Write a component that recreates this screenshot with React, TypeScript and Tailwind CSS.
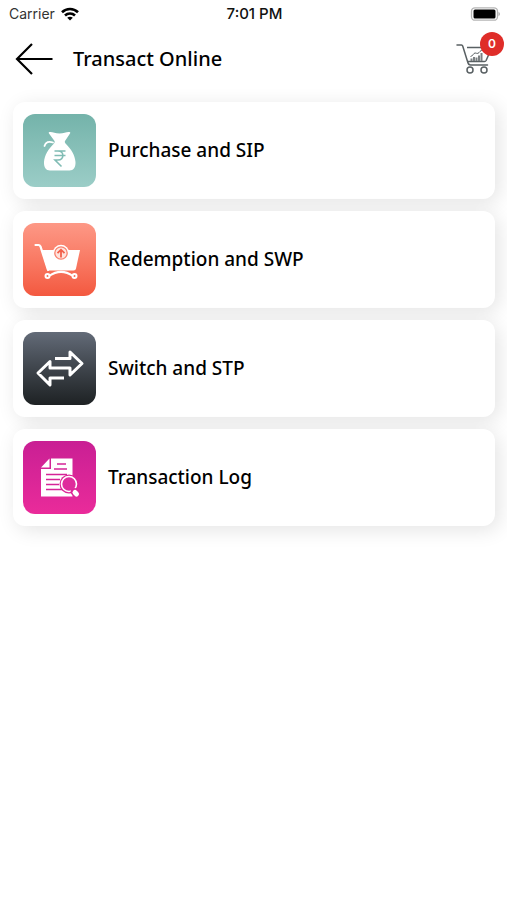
import type { ReactNode } from 'react';

interface MenuItem {
  id: string;
  label: string;
  tile: string;
  icon: ReactNode;
}

function MoneyBagIcon() {
  return (
    <svg viewBox="0 0 73 73" className="h-full w-full" fill="none" aria-hidden="true">
      <path
        fill="#fff"
        d="M26.5 18c3-.4 5.5 1.5 10 1.5s7-1.9 10-1.5c.8.1 1 .7.5 1.5L42 27c-.5 1 0 2 1 3 5 5 9 11 9.5 18 .3 5-2 8.500-6 8.500H27c-4 0-6.300-3.500-6-8.500.5-7 4.500-13 9.500-18 1-1 1.500-2 1-3L26 19.500c-.5-.8-.3-1.400.5-1.500Z"
      />
      <path d="M30 28.500c-4-1.500-7.500-.5-8.500 3.500" stroke="#fff" strokeWidth="1.8" strokeLinecap="round" />
      <path d="M31.500 37h11M31.500 41.500h11M31.500 37h3.500c6.500 0 6.500 9 0 9h-3l6.500 6.500" stroke="#80bcb4" strokeWidth="1.6" />
    </svg>
  );
}

function RedeemCartIcon() {
  return (
    <svg viewBox="0 0 73 73" className="h-full w-full" fill="none" aria-hidden="true">
      <path d="M12.5 22h3c1 0 1.5.5 2 1.500L25 47" stroke="#fff" strokeWidth="2.2" strokeLinecap="round" />
      <path fill="#fff" d="M18.500 27H57l-4 18.500c-.3 1.300-1 2-2.500 2H24.500Z" />
      <circle cx="38" cy="30" r="8.2" fill="#fff" />
      <circle cx="38" cy="30" r="6.2" fill="#fee3dd" stroke="#f9826e" strokeWidth="1.3" />
      <path d="M38 34.500V27M34.500 30.200l3.500-3.500 3.500 3.500" stroke="#f2604a" strokeWidth="1.8" />
      <path d="M26 53c8-5.500 16-5.500 24 0" stroke="#fff" strokeWidth="2" />
      <circle cx="24.500" cy="53" r="2" stroke="#fff" strokeWidth="2" />
      <circle cx="51.500" cy="53" r="2" stroke="#fff" strokeWidth="2" />
    </svg>
  );
}

function SwitchIcon() {
  return (
    <svg viewBox="0 0 73 73" className="h-full w-full" fill="none" aria-hidden="true">
      <path
        d="M32 26.500h15V20l12 11.500L47 43v-7H27v-6.500L15 41l12 12v-7h14"
        stroke="#fff"
        strokeWidth="3"
        strokeLinejoin="round"
      />
    </svg>
  );
}

function LogIcon() {
  return (
    <svg viewBox="0 0 73 73" className="h-full w-full" fill="none" aria-hidden="true">
      <path fill="#fff" d="M28 17.500h21.500v38H18V28h10Z" />
      <path fill="#fff" d="M26.500 17.500v9H18Z" />
      <path d="M34 23h9M31 28h13M23 33.500h21M23 38.500h14M23 43.500h13M23 48.500h16" stroke="#d52498" strokeWidth="1.4" />
      <circle cx="46" cy="43" r="9.5" fill="#dd2798" />
      <circle cx="46" cy="43" r="7.5" fill="#df2c9c" stroke="#fff" strokeWidth="1.6" />
      <path d="m51.500 51 1.500 1.500" stroke="#dd2798" strokeWidth="7.5" strokeLinecap="round" />
      <path d="m52 51.500 1.500 1.500" stroke="#fff" strokeWidth="5" strokeLinecap="round" />
    </svg>
  );
}

function CartIcon() {
  return (
    <svg viewBox="0 0 36 34" className="h-[34px] w-9" fill="none" stroke="#596063" strokeWidth="1.5" aria-hidden="true">
      <path d="M1 3h4.500c.7 0 1 .4 1.200 1l5 16c.5 2 1 3 2.800 3h17" strokeLinecap="round" />
      <path d="M11 5.500h15M11.500 19.500h17c.8 0 1.300-.4 1.600-1L33 12" />
      <circle cx="14" cy="28" r="3" />
      <circle cx="28" cy="28" r="3" />
      <path d="M14.500 14.500c2 0 3-3.500 4.500-3.500s1.500.7 3 .3S24 8 27 8" strokeWidth="1" />
      <path d="M15.500 19v-2.500M18 19v-4M20.500 19v-3.500M23 19v-5.500M25.500 19v-8" stroke="#7b8082" strokeWidth="2" />
    </svg>
  );
}

const items: MenuItem[] = [
  { id: 'purchase', label: 'Purchase and SIP', tile: 'from-[#74b3aa] to-[#9bcdc7]', icon: <MoneyBagIcon /> },
  { id: 'redemption', label: 'Redemption and SWP', tile: 'from-[#fd9886] to-[#f3583f]', icon: <RedeemCartIcon /> },
  { id: 'switch', label: 'Switch and STP', tile: 'from-[#636b78] to-[#1e2224]', icon: <SwitchIcon /> },
  { id: 'log', label: 'Transaction Log', tile: 'from-[#c91f94] to-[#ea2b9a]', icon: <LogIcon /> },
];

function StatusBar() {
  return (
    <div className="grid h-7 grid-cols-3 items-center pr-[7px] pl-[9px] font-['Inter',sans-serif] text-sm">
      <div className="flex items-center gap-1.5 text-[#333]">
        <span>Carrier</span>
        <svg viewBox="0 0 18 14" className="h-3.5 w-[18px]" fill="none" stroke="#000" strokeWidth="2.6" aria-hidden="true">
          <path d="M1 5.200c4.500-4.300 11.500-4.300 16 0M4 8.500c2.800-2.700 7.200-2.700 10 0" />
          <path d="M9 13.500 6.200 10.800c1.600-1.400 4-1.400 5.600 0Z" fill="#000" stroke="none" />
        </svg>
      </div>
      <div className="text-center text-[15px] font-medium text-[#111]">7:01 PM</div>
      <div className="flex justify-end">
        <svg viewBox="0 0 30 14" className="h-3.5 w-[30px]" fill="none" aria-hidden="true">
          <rect x="1.5" y=".8" width="26" height="12.4" rx="3.5" stroke="#b5b5b5" strokeWidth="1.3" />
          <rect x="3.5" y="2.5" width="22" height="9" rx="1.5" fill="#000" />
          <path d="M28.500 5c1.800.6 1.800 3.400 0 4Z" fill="#aaa" />
        </svg>
      </div>
    </div>
  );
}

export default function App() {
  return (
    <div className="min-h-screen bg-white font-['Noto_Sans',sans-serif] text-black">
      <StatusBar />

      <header className="flex h-[62px] items-center px-[15px]">
        <button type="button" aria-label="Back">
          <svg viewBox="0 0 38 32" className="h-8 w-[38px]" fill="none" stroke="#000" strokeWidth="2.2" aria-hidden="true">
            <path d="M2 16h35.500M17 1 2 16l15 15" />
          </svg>
        </button>
        <h1 className="ml-5 flex-1 text-xl font-medium">Transact Online</h1>
        <button type="button" aria-label="Cart" className="relative">
          <CartIcon />
          <span className="absolute -top-2.5 -right-3 flex h-6 w-6 items-center justify-center rounded-full bg-[#df2d29] font-['Inter',sans-serif] text-xs font-semibold text-white">
            0
          </span>
        </button>
      </header>

      <main className="flex flex-col gap-3 pt-3 pr-3 pb-5 pl-[13px]">
        {items.map((item) => (
          <button
            key={item.id}
            type="button"
            className="flex items-center gap-3 rounded-xl bg-white px-2.5 py-3 text-left shadow-[4px_4px_20px_rgba(0,0,0,0.11)]"
          >
            <span className={`h-[73px] w-[73px] shrink-0 overflow-hidden rounded-xl bg-linear-to-b ${item.tile}`}>
              {item.icon}
            </span>
            <span className="text-[19px] font-medium">{item.label}</span>
          </button>
        ))}
      </main>
    </div>
  );
}
